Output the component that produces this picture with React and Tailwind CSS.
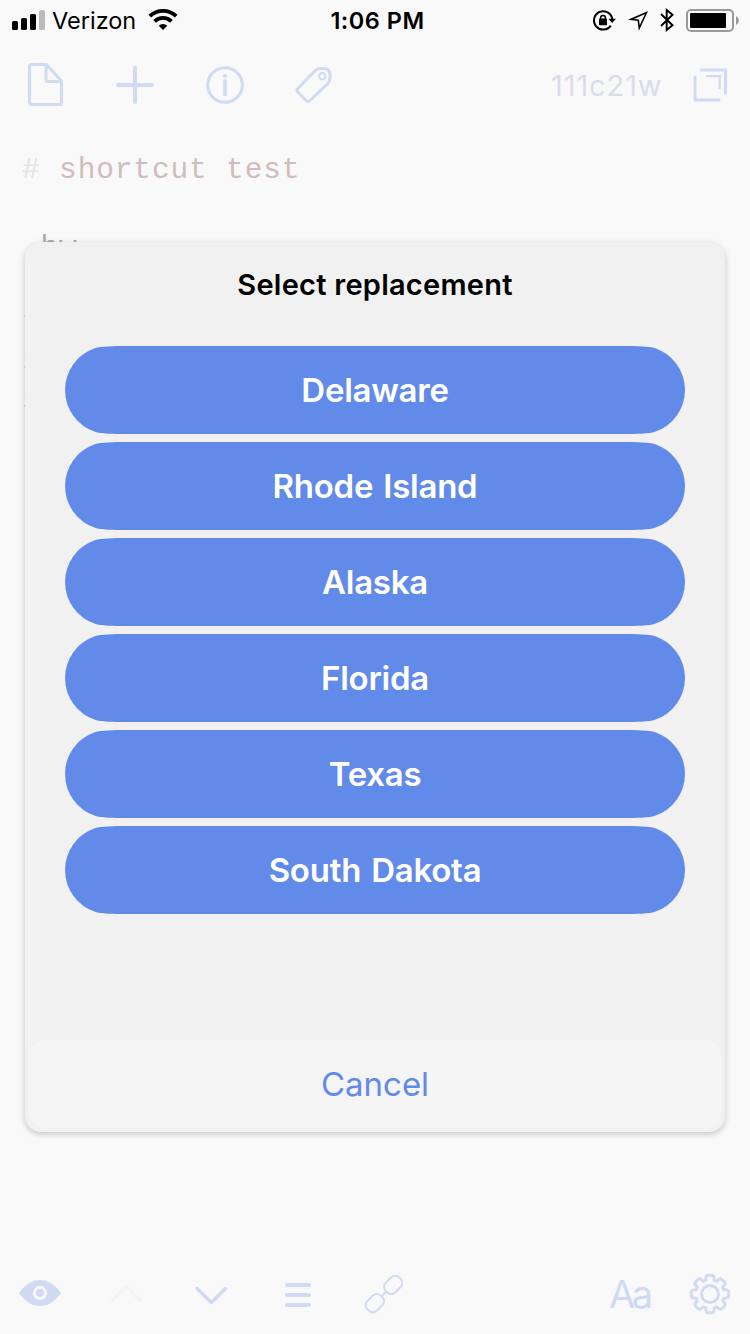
const states = ["Delaware", "Rhode Island", "Alaska", "Florida", "Texas", "South Dakota"];

function StatusBar() {
  return (
    <div className="flex h-10 items-center justify-between pl-3 pr-[10px] text-[23.5px] leading-none text-black">
      <div className="flex w-[260px] items-center">
        <svg className="h-10 w-[34px]" viewBox="12 0 34 40">
          <rect x="12" y="21" width="6" height="9" rx="1.6" />
          <rect x="21" y="18" width="6" height="12" rx="1.6" />
          <rect x="30" y="14" width="6" height="16" rx="1.6" />
          <rect x="39" y="10" width="6" height="20" rx="1.6" fill="#bababa" />
        </svg>
        <span className="ml-[6px] w-[84px] pt-px whitespace-nowrap">Verizon</span>
        <svg className="ml-[12px] h-10 w-[30px]" viewBox="148 0 30 40" fill="none" stroke="#000">
          <path d="M149.8 16.2a19 19 0 0 1 26.4 0" strokeWidth="3.8" />
          <path d="M154.6 21.4a12 12 0 0 1 16.8 0" strokeWidth="3.8" />
          <path d="M163 30l-4.3-4.3a6.2 6.2 0 0 1 8.6 0z" fill="#000" stroke="none" />
        </svg>
      </div>
      <div className="pt-px font-semibold tracking-[0.5px] whitespace-nowrap">1:06 PM</div>
      <svg className="ml-[107px] h-10 w-[150px]" viewBox="590 0 150 40" fill="none" stroke="#000">
        <path d="M610.8 25.600a9.200 9.200 0 1 1 1.500-6.600" strokeWidth="2" />
        <path d="M608.500 18.800h7.400l-3.700 4.200z" fill="#000" stroke="none" />
        <rect x="599" y="18.500" width="8" height="6.700" rx=".8" fill="#000" stroke="none" />
        <path d="M600.600 19v-1.200a2.400 2.400 0 0 1 4.800 0V19" strokeWidth="1.500" />
        <path d="M646.500 12.500L639.300 28L638.300 20.300L630.800 19.400z" strokeWidth="1.600" strokeLinejoin="miter" />
        <path d="M661 14l11.500 11.200-5.800 4.800V10l5.800 4.800L661 26" strokeWidth="1.900" />
        <rect x="687" y="10" width="46" height="21" rx="4" stroke="#999" strokeWidth="2" />
        <rect x="690" y="13" width="36" height="15" rx="1" fill="#000" stroke="none" />
        <path d="M736 16q3 2 3 4.500t-3 4.500z" fill="#999" stroke="none" />
      </svg>
    </div>
  );
}

function Toolbar() {
  return (
    <div className="flex h-[90px] items-center justify-between pr-[23px] pl-[26px] text-[#d0dbf3]">
      <svg className="h-[90px] w-[310px]" viewBox="26 40 310 90" fill="none" stroke="currentColor" strokeWidth="3" strokeLinejoin="round" strokeLinecap="round">
        <path d="M31.500 64.500H46.500L61.500 81V102.500Q61.500 104.500 59.500 104.500H31.500Q29.500 104.500 29.500 102.500V66.500Q29.500 64.500 31.500 64.500zM46 65V79.500Q46 81.500 48 81.500H61" />
        <path d="M135 68v34M118 85h34" strokeWidth="4" />
        <circle cx="225" cy="85" r="17.300" />
        <path d="M225 81v13.500" strokeWidth="3.800" />
        <circle cx="225" cy="76" r="2.100" fill="currentColor" stroke="none" />
        <path d="M315 70.800Q317.500 68.400 321 68.400H323.500Q330 68.400 330 75V78Q330 81.500 327.500 84L310 100.500Q308 102.300 306 100.300L298 92.300Q296 90.300 298 88.200z" />
        <circle cx="322.300" cy="76.200" r="3.200" strokeWidth="2" />
      </svg>
      <div className="flex items-center">
        <span className="w-[110px] text-[29px] leading-none tracking-[0.9px] whitespace-nowrap text-[#d9dde8]">111c21w</span>
        <svg className="ml-[32px] h-[90px] w-[34px]" viewBox="693 40 34 90" fill="none" stroke="currentColor" strokeWidth="3">
          <path d="M701 70H725.500V93M695 77V100H719" strokeLinecap="round" />
          <path d="M706 76.200H719.700V89" strokeWidth="2.200" />
        </svg>
      </div>
    </div>
  );
}

function Editor() {
  return (
    <div className="h-[1124px] pt-[21px] pl-[22px] font-['Liberation_Mono',monospace] text-[29.5px] leading-[39px] tracking-[0.85px] whitespace-pre text-[#aaaaaa]">
      <div className="text-[#d0bcbc]"><span className="text-[#e4e4e0]">#</span> shortcut test</div>
      <div className="pt-[39px]"> hw</div>
      <div className="pt-[36px]">t</div>
      <div>s</div>
      <div>s</div>
    </div>
  );
}

function BottomBar() {
  return (
    <div className="flex h-20 items-center justify-between pr-[19px] pl-[18px] text-[#d0dbf3]">
      <svg className="h-20 w-[390px]" viewBox="18 1254 390 80" fill="none" stroke="currentColor" strokeLinecap="round" strokeLinejoin="round">
        <path d="M19 1293Q28 1280 40 1280T61 1293Q52 1306 40 1306T19 1293z" fill="currentColor" stroke="none" />
        <circle cx="40" cy="1293" r="5.500" stroke="#f9f9f9" strokeWidth="3" />
        <path d="M112 1300.500L126 1286.500L140 1300.500" stroke="#f4f4f4" strokeWidth="3" />
        <path d="M197 1288.500L211.300 1302.500L225.500 1288.500" strokeWidth="3.500" />
        <path d="M287 1285h22M287 1295h22M287 1305h22" strokeWidth="4" />
        <g strokeWidth="2" transform="rotate(-45 384 1294)">
          <rect x="361.500" y="1287.300" width="19" height="13.500" rx="5.500" />
          <rect x="387.500" y="1287.300" width="19" height="13.500" rx="5.500" />
          <path d="M381 1294h6" />
        </g>
      </svg>
      <div className="flex items-center">
        <span className="w-[44px] text-[38px] leading-none tracking-[-3.5px] whitespace-nowrap">Aa</span>
        <svg className="ml-[36px] h-20 w-[42px]" viewBox="-21 -40 42 80" fill="none" stroke="currentColor" strokeWidth="2.900" strokeLinejoin="round">
          <circle r="8.500" />
          <path d="M-4.100 -13.800V-16Q-4.100 -18.700 -1.500 -18.700H1.500Q4.100 -18.700 4.100 -16V-13.800L6.900 -12.700L8.400 -14.200Q10.300 -16.100 12.200 -14.300L14.300 -12.200Q16.100 -10.300 14.200 -8.400L12.700 -6.900L13.800 -4.100H16Q18.700 -4.100 18.700 -1.500V1.500Q18.700 4.100 16 4.100H13.800L12.700 6.900L14.200 8.400Q16.100 10.300 14.300 12.200L12.200 14.300Q10.300 16.100 8.400 14.200L6.900 12.700L4.100 13.800V16Q4.100 18.700 1.500 18.700H-1.500Q-4.100 18.700 -4.100 16V13.800L-6.900 12.700L-8.400 14.200Q-10.300 16.100 -12.200 14.300L-14.300 12.200Q-16.100 10.300 -14.200 8.400L-12.700 6.900L-13.800 4.100H-16Q-18.700 4.100 -18.700 1.500V-1.500Q-18.700 -4.100 -16 -4.100H-13.800L-12.700 -6.900L-14.200 -8.400Q-16.100 -10.300 -14.300 -12.200L-12.200 -14.300Q-10.300 -16.100 -8.400 -14.200L-6.900 -12.700z" />
        </svg>
      </div>
    </div>
  );
}

function ReplacementDialog() {
  return (
    <div className="absolute top-[242px] left-[25px] flex h-[890px] w-[700px] flex-col rounded-[16px] bg-[#f1f1f1] shadow-[0_2px_6px_rgba(0,0,0,0.22)]">
      <h1 className="pt-[27px] text-center text-[29px] leading-[32px] font-semibold tracking-[0.25px] text-black">Select replacement</h1>
      <div className="flex flex-col gap-2 px-10 pt-[45px]">
        {states.map((name) => (
          <button key={name} className="h-[88px] bg-[#628ae8] text-[33px] leading-none font-semibold tracking-[-0.25px] [word-spacing:2px] text-white [clip-path:path('M62_0H558C572_0_584_0.3_590_2.3A44_44_0_0_1_590_85.7C584_87.7_572_88_558_88H62C48_88_36_87.7_30_85.7A44_44_0_0_1_30_2.3C36_0.3_48_0_62_0Z')]">
            {name}
          </button>
        ))}
      </div>
      <button className="mx-1 mt-auto mb-1 h-[88px] rounded-[16px] bg-[#f5f5f5] text-[33px] leading-none text-[#628ae8]">Cancel</button>
    </div>
  );
}

export default function App() {
  return (
    <div className="relative h-[1334px] w-[750px] overflow-hidden bg-[#f9f9f9] font-['Inter',sans-serif]">
      <StatusBar />
      <Toolbar />
      <Editor />
      <BottomBar />
      <ReplacementDialog />
    </div>
  );
}
